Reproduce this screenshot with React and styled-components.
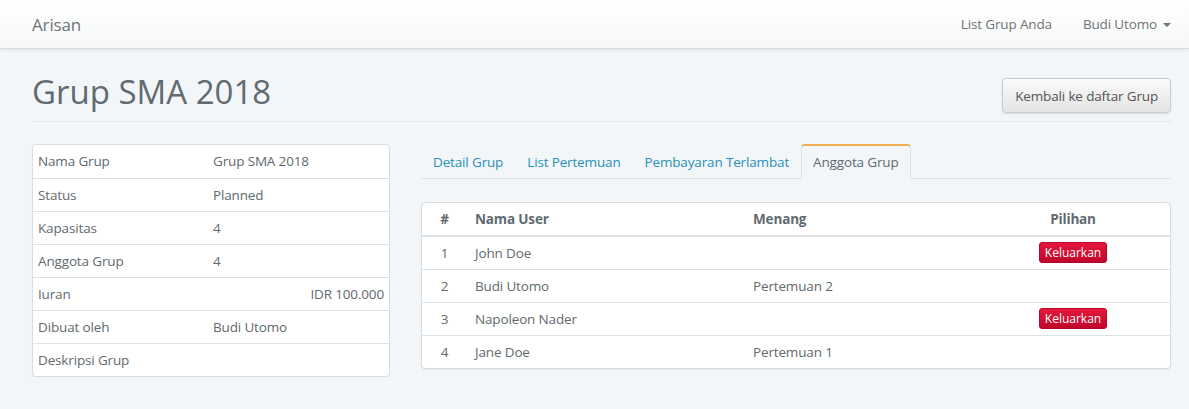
import React from 'react';
import styled, { createGlobalStyle } from 'styled-components';

const GlobalStyle = createGlobalStyle`
  body {
    margin: 0;
    background: #f3f6f9;
    font-family: "Open Sans", "DejaVu Sans", sans-serif;
    font-size: 13.5px;
    letter-spacing: -0.15px;
    color: #5f6a70;
  }
  * { box-sizing: border-box; }
`;

const Navbar = styled.nav`
  height: 49px;
  display: flex;
  align-items: center;
  justify-content: space-between;
  padding: 0 18px 0 32px;
  background: linear-gradient(#ffffff, #f6f7f8);
  border-bottom: 1px solid #d4dbe2;
  box-shadow: 0 1px 3px rgba(0, 0, 0, 0.08);
`;

const Brand = styled.div`
  font-size: 17px;
  color: #6f7477;
`;

const NavLinks = styled.div`
  display: flex;
  gap: 31px;
  color: #6f7477;
`;

const Caret = styled.span`
  display: inline-block;
  margin-left: 6px;
  vertical-align: middle;
  border-top: 4px solid #6f7477;
  border-left: 4px solid transparent;
  border-right: 4px solid transparent;
`;

const Page = styled.div`
  padding: 0 18px 0 32px;
`;

const Header = styled.div`
  display: flex;
  justify-content: space-between;
  align-items: flex-start;
  padding: 23px 0 8px;
  border-bottom: 1px solid #e2e7ec;
`;

const Title = styled.h1`
  margin: 0;
  font-weight: 400;
  font-size: 33px;
  line-height: 40px;
  letter-spacing: 0;
  color: #5f6b70;
`;

const BackButton = styled.button`
  margin-top: 6px;
  font-family: inherit;
  font-size: 13.5px;
  letter-spacing: -0.15px;
  color: #555;
  height: 35px;
  padding: 0 12px;
  border: 1px solid #c9ccce;
  border-radius: 4px;
  background: linear-gradient(#fbfbfb, #e3e3e3);
  box-shadow: 0 1px 2px rgba(0, 0, 0, 0.1);
`;

const Columns = styled.div`
  display: grid;
  grid-template-columns: 358px 1fr;
  gap: 31px;
  margin-top: 22px;
`;

const Card = styled.div`
  background: #fff;
  border: 1px solid #d7dde3;
  border-radius: 4px;
  box-shadow: 0 1px 2px rgba(0, 0, 0, 0.06);
  overflow: hidden;
`;

const Table = styled.table`
  width: 100%;
  border-collapse: collapse;
  table-layout: fixed;
`;

const Td = styled.td`
  height: 33px;
  padding: 0 ${(p) => p.$pad || 5}px;
  text-align: ${(p) => p.$align || 'left'};
  border-top: ${(p) => (p.$first ? 'none' : '1px solid #dde2e6')};
  vertical-align: middle;
`;

const Th = styled.th`
  height: 33px;
  padding: 0 8px;
  font-weight: 700;
  text-align: ${(p) => p.$align || 'left'};
  border-bottom: 2px solid #dde2e6;
  color: #5f6a70;
`;

const Tabs = styled.div`
  display: flex;
  height: 35px;
  border-bottom: 1px solid #dde2e6;
`;

const Tab = styled.div`
  padding: 0 11px;
  display: flex;
  align-items: center;
  margin-bottom: -1px;
  color: ${(p) => (p.$active ? '#5f6a70' : '#2a90b8')};
  border: 1px solid ${(p) => (p.$active ? '#dde2e6' : 'transparent')};
  border-bottom-color: ${(p) => (p.$active ? '#f3f6f9' : 'transparent')};
  border-top: 2px solid ${(p) => (p.$active ? '#f0ad4e' : 'transparent')};
  border-radius: 4px 4px 0 0;
`;

const RightCard = styled(Card)`
  margin-top: 23px;
`;

const DangerButton = styled.button`
  font-family: inherit;
  font-size: 12px;
  color: #fff;
  height: 21px;
  padding: 0 5px;
  border: 1px solid #b5062a;
  border-radius: 3px;
  background: linear-gradient(#e5173b, #c1062b);
`;

const info = [
  ['Nama Grup', 'Grup SMA 2018'],
  ['Status', 'Planned'],
  ['Kapasitas', '4'],
  ['Anggota Grup', '4'],
  ['Iuran', 'IDR 100.000', 'right'],
  ['Dibuat oleh', 'Budi Utomo'],
  ['Deskripsi Grup', ''],
];

const members = [
  { id: 1, name: 'John Doe', win: '', kick: true },
  { id: 2, name: 'Budi Utomo', win: 'Pertemuan 2', kick: false },
  { id: 3, name: 'Napoleon Nader', win: '', kick: true },
  { id: 4, name: 'Jane Doe', win: 'Pertemuan 1', kick: false },
];

export default function App() {
  return (
    <>
      <GlobalStyle />
      <Navbar>
        <Brand>Arisan</Brand>
        <NavLinks>
          <span>List Grup Anda</span>
          <span>
            Budi Utomo
            <Caret />
          </span>
        </NavLinks>
      </Navbar>
      <Page>
        <Header>
          <Title>Grup SMA 2018</Title>
          <BackButton>Kembali ke daftar Grup</BackButton>
        </Header>
        <Columns>
          <div>
            <Card>
              <Table>
                <colgroup>
                  <col style={{ width: 175 }} />
                  <col />
                </colgroup>
                <tbody>
                  {info.map(([label, value, align], i) => (
                    <tr key={label}>
                      <Td $first={i === 0}>{label}</Td>
                      <Td $first={i === 0} $align={align}>{value}</Td>
                    </tr>
                  ))}
                </tbody>
              </Table>
            </Card>
          </div>
          <div>
            <Tabs>
              <Tab>Detail Grup</Tab>
              <Tab>List Pertemuan</Tab>
              <Tab>Pembayaran Terlambat</Tab>
              <Tab $active>Anggota Grup</Tab>
            </Tabs>
            <RightCard>
              <Table>
                <colgroup>
                  <col style={{ width: 45 }} />
                  <col style={{ width: 278 }} />
                  <col style={{ width: 231 }} />
                  <col />
                </colgroup>
                <thead>
                  <tr>
                    <Th $align="center">#</Th>
                    <Th>Nama User</Th>
                    <Th>Menang</Th>
                    <Th $align="center">Pilihan</Th>
                  </tr>
                </thead>
                <tbody>
                  {members.map((m, i) => (
                    <tr key={m.id}>
                      <Td $first={i === 0} $pad={8} $align="center">{m.id}</Td>
                      <Td $first={i === 0} $pad={8}>{m.name}</Td>
                      <Td $first={i === 0} $pad={8}>{m.win}</Td>
                      <Td $first={i === 0} $pad={8} $align="center">
                        {m.kick && <DangerButton>Keluarkan</DangerButton>}
                      </Td>
                    </tr>
                  ))}
                </tbody>
              </Table>
            </RightCard>
          </div>
        </Columns>
      </Page>
    </>
  );
}
